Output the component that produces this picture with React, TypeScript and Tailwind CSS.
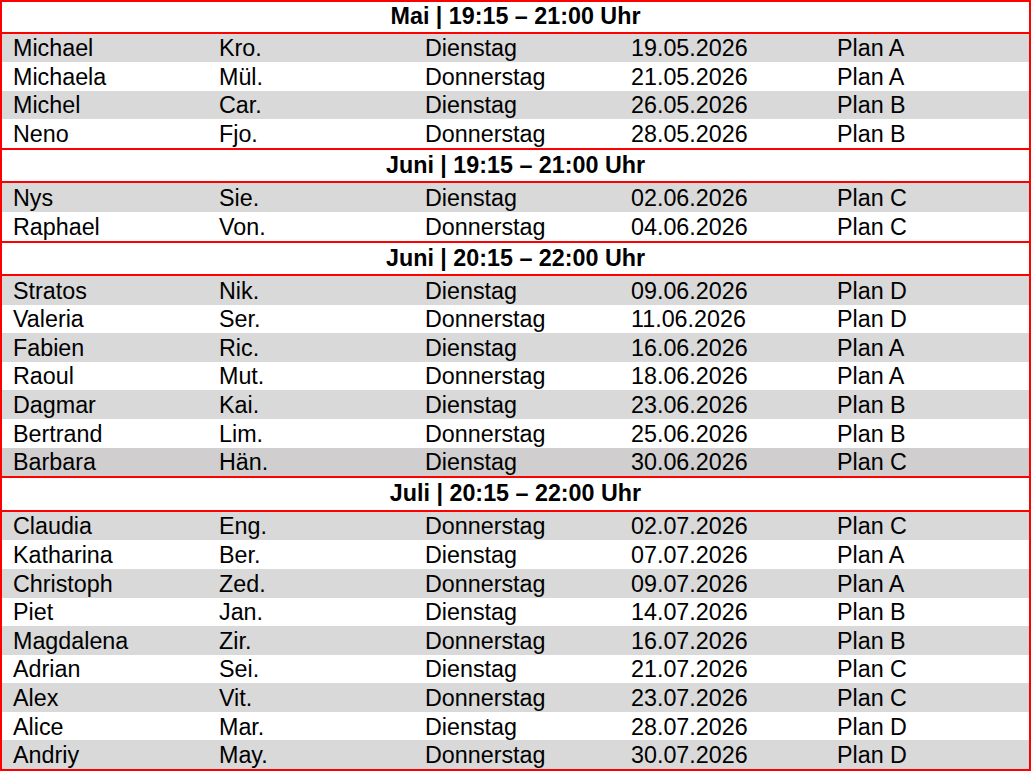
const sections = [
  {
    title: "Mai | 19:15 – 21:00 Uhr",
    first: true,
    rows: [
      ["Michael", "Kro.", "Dienstag", "19.05.2026", "Plan A"],
      ["Michaela", "Mül.", "Donnerstag", "21.05.2026", "Plan A"],
      ["Michel", "Car.", "Dienstag", "26.05.2026", "Plan B"],
      ["Neno", "Fjo.", "Donnerstag", "28.05.2026", "Plan B"],
    ],
  },
  {
    title: "Juni | 19:15 – 21:00 Uhr",
    rows: [
      ["Nys", "Sie.", "Dienstag", "02.06.2026", "Plan C"],
      ["Raphael", "Von.", "Donnerstag", "04.06.2026", "Plan C"],
    ],
  },
  {
    title: "Juni | 20:15 – 22:00 Uhr",
    rows: [
      ["Stratos", "Nik.", "Dienstag", "09.06.2026", "Plan D"],
      ["Valeria", "Ser.", "Donnerstag", "11.06.2026", "Plan D"],
      ["Fabien", "Ric.", "Dienstag", "16.06.2026", "Plan A"],
      ["Raoul", "Mut.", "Donnerstag", "18.06.2026", "Plan A"],
      ["Dagmar", "Kai.", "Dienstag", "23.06.2026", "Plan B"],
      ["Bertrand", "Lim.", "Donnerstag", "25.06.2026", "Plan B"],
      ["Barbara", "Hän.", "Dienstag", "30.06.2026", "Plan C"],
    ],
  },
  {
    title: "Juli | 20:15 – 22:00 Uhr",
    rows: [
      ["Claudia", "Eng.", "Donnerstag", "02.07.2026", "Plan C"],
      ["Katharina", "Ber.", "Dienstag", "07.07.2026", "Plan A"],
      ["Christoph", "Zed.", "Donnerstag", "09.07.2026", "Plan A"],
      ["Piet", "Jan.", "Dienstag", "14.07.2026", "Plan B"],
      ["Magdalena", "Zir.", "Donnerstag", "16.07.2026", "Plan B"],
      ["Adrian", "Sei.", "Dienstag", "21.07.2026", "Plan C"],
      ["Alex", "Vit.", "Donnerstag", "23.07.2026", "Plan C"],
      ["Alice", "Mar.", "Dienstag", "28.07.2026", "Plan D"],
      ["Andriy", "May.", "Donnerstag", "30.07.2026", "Plan D"],
    ],
  },
];

// red rule between header and rows / between sections
const Rule = () => <div className="h-[2px] bg-[#ff0000]" />;

const App = () => {
  return (
    <div className="w-[1031px] bg-white font-['Liberation_Sans',Arial,sans-serif] text-[23.3px] text-black">
      <div className="bg-[#ff0000] p-[2px]">
        <div className="bg-white">
          {sections.map((section, si) => (
            <div key={section.title}>
              <div
                className={`flex items-center justify-center font-bold leading-none ${
                  section.first ? "h-[29.5px]" : "h-[31.5px]"
                }`}
              >
                {section.title}
              </div>
              <Rule />

              {section.rows.map((row, ri) => (
                <div
                  key={row[0]}
                  className={`grid grid-cols-[206px_206px_206px_206px_1fr] items-center h-[28.6px] leading-none ${
                    ri % 2 === 0
                      ? row[0] === "Barbara"
                        ? "bg-[#d0cece]"
                        : "bg-[#d9d9d9]"
                      : "bg-white"
                  }`}
                >
                  {row.map((cell, ci) => (
                    <div key={ci} className="pl-[11px] pt-[2px] whitespace-nowrap">
                      {cell}
                    </div>
                  ))}
                </div>
              ))}

              {si < sections.length - 1 && <Rule />}
            </div>
          ))}
        </div>
      </div>
    </div>
  );
};

export default App;
